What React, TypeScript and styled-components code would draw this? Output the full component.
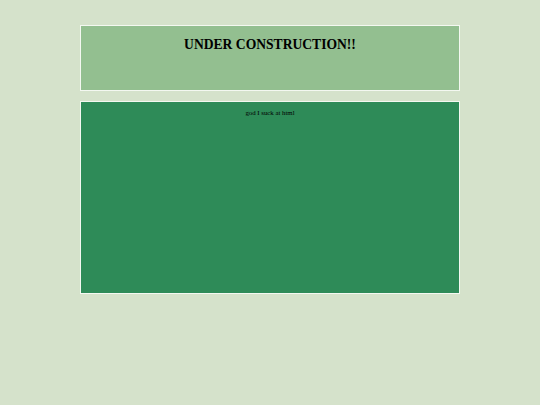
import styled, { createGlobalStyle } from 'styled-components';

const GlobalStyle = createGlobalStyle`
  html, body {
    margin: 0;
    padding: 0;
    background: #d5e2cb;
    font-family: "Liberation Serif", "Times New Roman", serif;
  }
`;

const Page = styled.div`
  width: 540px;
  height: 405px;
  padding-top: 25px;
  box-sizing: border-box;
  display: flex;
  flex-direction: column;
  align-items: center;
  gap: 10px;
`;

const Panel = styled.div<{ $bg: string; $height: number }>`
  width: 380px;
  height: ${p => p.$height}px;
  box-sizing: border-box;
  border: 1.5px solid #f4f8f1;
  background: ${p => p.$bg};
  text-align: center;
  color: #000;
`;

const Title = styled.h1`
  margin: 11px 0 0;
  font-size: 13.6px;
  font-weight: bold;
  line-height: 16px;
`;

const Note = styled.p`
  margin: 6px 0 0;
  font-size: 6.8px;
  line-height: 9px;
`;

export default function App() {
  return (
    <>
      <GlobalStyle />
      <Page>
        <Panel $bg="#93bf90" $height={66}>
          <Title>UNDER CONSTRUCTION!!</Title>
        </Panel>
        <Panel $bg="#2e8b58" $height={193}>
          <Note>god I suck at html</Note>
        </Panel>
      </Page>
    </>
  );
}
